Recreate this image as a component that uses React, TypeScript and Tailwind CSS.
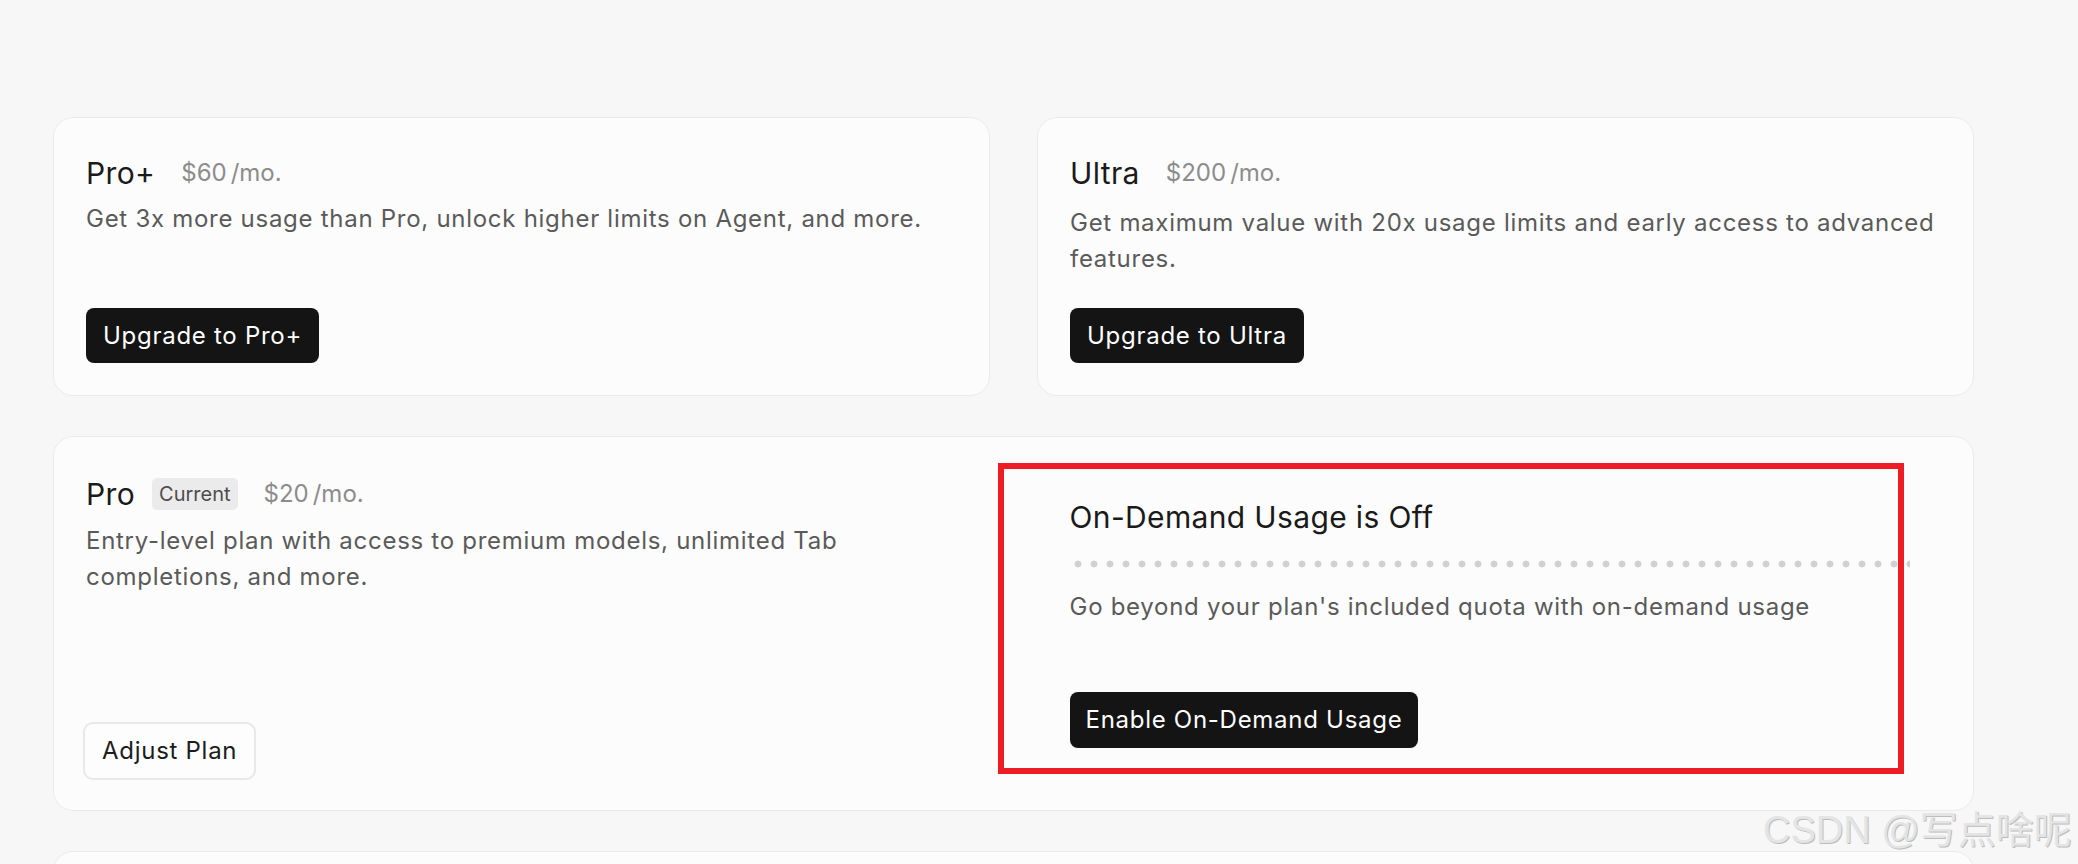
import React from "react";

function Price({ amount }: { amount: string }) {
  return (
    <span className="text-[24px] leading-[36px] text-[#8c8c8c]">
      {amount}
      <span className="ml-[4px]">/mo.</span>
    </span>
  );
}

function DarkButton({ children }: { children: React.ReactNode }) {
  return (
    <button className="h-[55px] rounded-[8px] bg-[#141414] px-[17px] text-[24px] leading-none tracking-[0.03em] text-white">
      {children}
    </button>
  );
}

function UpgradeCard({
  name,
  amount,
  desc,
  cta,
  descTop,
}: {
  name: string;
  amount: string;
  desc: string;
  cta: string;
  descTop: string;
}) {
  return (
    <div className="flex flex-col rounded-[20px] border border-[#ebebeb] bg-[#fcfcfc] px-8 pt-[37px] pb-8">
      <div className="flex items-center gap-[26px]">
        <span className="text-[30px] leading-[36px] tracking-[0.012em] text-[#1a1a1a]">{name}</span>
        <Price amount={amount} />
      </div>
      <p className={`${descTop} text-[24px] leading-[36px] tracking-[0.03em] text-[#5a5a5a]`}>{desc}</p>
      <div className="mt-auto pt-[31px]">
        <DarkButton>{cta}</DarkButton>
      </div>
    </div>
  );
}

export default function App() {
  return (
    <div className="relative h-[864px] w-[2078px] overflow-hidden bg-[#f7f7f7] font-['Inter',sans-serif]">
      <div className="ml-[53px] flex w-[1921px] flex-col gap-[40px] pt-[117px]">
        {/* Upgrade options */}
        <div className="grid grid-cols-2 gap-[47px]">
          <UpgradeCard
            name="Pro+"
            amount="$60"
            desc="Get 3x more usage than Pro, unlock higher limits on Agent, and more."
            cta="Upgrade to Pro+"
            descTop="mt-[10px]"
          />
          <UpgradeCard
            name="Ultra"
            amount="$200"
            desc="Get maximum value with 20x usage limits and early access to advanced features."
            cta="Upgrade to Ultra"
            descTop="mt-[14px]"
          />
        </div>

        {/* Current plan */}
        <div className="relative rounded-[20px] border border-[#ebebeb] bg-[#fcfcfc] px-8 pt-[39px] pb-[30px]">
          <div className="grid min-h-[304px] grid-cols-2 gap-x-[112px]">
            <div className="flex flex-col">
              <div className="flex items-center">
                <span className="text-[30px] leading-[36px] tracking-[0.012em] text-[#1a1a1a]">Pro</span>
                <span className="ml-[17px] flex h-[32px] items-center rounded-[5px] bg-[#ebebeb] px-[7px] text-[20px] text-[#4d4d4d]">
                  Current
                </span>
                <span className="ml-[26px]">
                  <Price amount="$20" />
                </span>
              </div>
              <p className="mt-[11px] text-[24px] leading-[36px] tracking-[0.03em] text-[#5a5a5a]">
                Entry-level plan with access to premium models, unlimited Tab completions, and more.
              </p>
              <div className="mt-auto">
                <button className="-ml-[3px] h-[58px] rounded-[10px] border-2 border-[#e8e8e8] bg-[#fdfdfd] px-[17px] text-[24px] leading-none tracking-[0.03em] text-[#1c1c1c]">
                  Adjust Plan
                </button>
              </div>
            </div>

            <div className="flex flex-col pt-[23px]">
              <h3 className="text-[30px] leading-[36px] tracking-[0.012em] text-[#1a1a1a]">On-Demand Usage is Off</h3>
              <div className="mt-[25px] h-[8px] w-[840px] bg-[radial-gradient(circle,#d0d0d0_3.2px,transparent_3.8px)] bg-[length:16px_8px]" />
              <p className="mt-[21px] text-[24px] leading-[36px] tracking-[0.03em] text-[#5a5a5a]">
                Go beyond your plan's included quota with on-demand usage
              </p>
              <div className="mt-[67px]">
                <button className="h-[56px] rounded-[8px] bg-[#141414] px-[16px] text-[24px] leading-none tracking-[0.03em] text-white">
                  Enable On-Demand Usage
                </button>
              </div>
            </div>
          </div>

          {/* annotation box */}
          <div className="pointer-events-none absolute left-[944px] top-[26px] h-[311px] w-[906px] border-[6px] border-[#ee1c25]" />
        </div>

        {/* Next card (cut off) */}
        <div className="h-[200px] rounded-[20px] border border-[#ebebeb] bg-[#fcfcfc]" />
      </div>

      {/* watermark */}
      <div className="pointer-events-none absolute left-[1763px] top-[811px] whitespace-nowrap font-['Liberation_Sans','Noto_Sans_CJK_SC',sans-serif] text-[38px] leading-[38px] text-[#e4e4e4] [text-shadow:1px_1px_0_#bcbcbc]">
        CSDN @写点啥呢
      </div>
    </div>
  );
}
